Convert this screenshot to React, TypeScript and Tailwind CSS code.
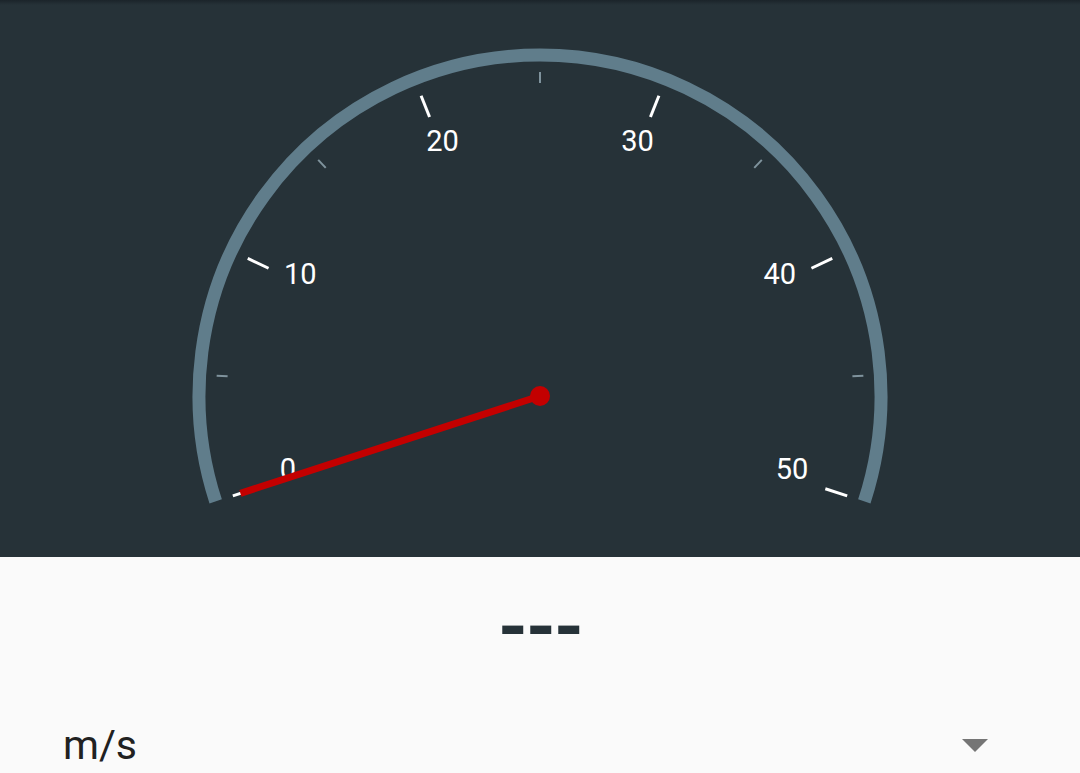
import React from 'react';

const CX = 540;
const CY = 396;
const START = 198; // degrees, value 0
const SPAN = 216; // degrees for 0..50

const pt = (deg: number, r: number) => {
  const a = (deg * Math.PI) / 180;
  return { x: CX + r * Math.cos(a), y: CY - r * Math.sin(a) };
};

const angleFor = (v: number) => START - (v / 50) * SPAN;

const Gauge = ({ value }: { value: number }) => {
  const arcStart = pt(angleFor(0), 341);
  const arcEnd = pt(angleFor(50), 341);
  const majors = [0, 10, 20, 30, 40, 50];
  const minors = [5, 15, 25, 35, 45];
  const tip = pt(angleFor(value), 315);

  return (
    <svg width="1080" height="557" viewBox="0 0 1080 557" className="block">
      <path
        d={`M ${arcStart.x} ${arcStart.y} A 341 341 0 1 1 ${arcEnd.x} ${arcEnd.y}`}
        fill="none"
        stroke="#607d8b"
        strokeWidth="13"
      />
      {minors.map((v) => {
        const a = pt(angleFor(v), 313);
        const b = pt(angleFor(v), 324);
        return <line key={v} x1={a.x} y1={a.y} x2={b.x} y2={b.y} stroke="#7f939d" strokeWidth="2" />;
      })}
      {majors.map((v) => {
        const a = pt(angleFor(v), 300);
        const b = pt(angleFor(v), 323);
        const l = pt(angleFor(v), 265);
        return (
          <g key={v}>
            <line x1={a.x} y1={a.y} x2={b.x} y2={b.y} stroke="#ffffff" strokeWidth="3" />
            <text
              x={l.x}
              y={l.y + 1}
              textAnchor="middle"
              fill="#ffffff"
              fontSize="29"
              fontFamily="Roboto, 'Liberation Sans', sans-serif"
            >
              {v}
            </text>
          </g>
        );
      })}
      <line x1={CX} y1={CY} x2={tip.x} y2={tip.y} stroke="#c30000" strokeWidth="7" />
      <circle cx={CX} cy={CY} r="10" fill="#c30000" />
    </svg>
  );
};

export default function App() {
  return (
    <div className="w-[1080px] h-[773px] overflow-hidden bg-[#fafafa] font-['Roboto',sans-serif]">
      {/* gauge panel */}
      <div className="relative h-[557px] bg-[#263238]">
        <div className="absolute inset-x-0 top-0 h-[5px] bg-gradient-to-b from-[#1b242a] to-transparent" />
        <Gauge value={0} />
      </div>

      {/* reading */}
      <div className="flex justify-center pt-[32px] h-[164px]">
        <span className="text-[76px] leading-[76px] font-bold text-[#263238] tracking-[-2px]">---</span>
      </div>

      {/* unit selector */}
      <div className="flex items-center justify-between pl-[63px] pr-[92px]">
        <span className="text-[41px] leading-[48px] text-[#212121]">m/s</span>
        <span className="w-0 h-0 border-l-[13px] border-r-[13px] border-t-[13px] border-l-transparent border-r-transparent border-t-[#757575]" />
      </div>
    </div>
  );
}
